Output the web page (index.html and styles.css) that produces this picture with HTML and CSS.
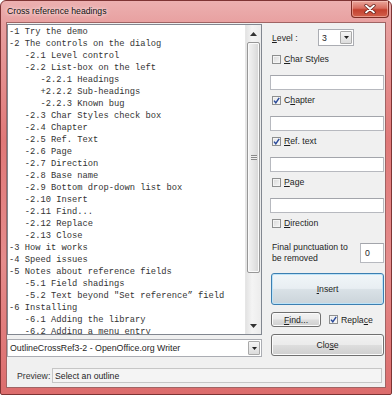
FILE: index.html
```html
<!DOCTYPE html>
<html>
<head>
    <meta charset="utf-8">
    <title>Cross reference headings</title>
    <link rel="stylesheet" href="styles.css">
</head>
<body>
<div class="window">
    <div class="titlebar">
        <span class="title">Cross reference headings</span>
        <div class="close-btn">
            <svg width="12" height="10" viewBox="0 0 12 10"><path d="M2 1.5 L10 8.5 M10 1.5 L2 8.5" stroke="#5a1a14" stroke-width="3.2" stroke-linecap="round"/><path d="M2 1.5 L10 8.5 M10 1.5 L2 8.5" stroke="#fff" stroke-width="1.8" stroke-linecap="round"/></svg>
        </div>
    </div>

    <div class="client">
        <div class="main">
            <div class="left">
                <div class="listbox">
                    <div class="outline">
                        <div class="row">-1 Try the demo</div>
                        <div class="row">-2 The controls on the dialog</div>
                        <div class="row l2">-2.1 Level control</div>
                        <div class="row l2">-2.2 List-box on the left</div>
                        <div class="row l3">-2.2.1 Headings</div>
                        <div class="row l3">+2.2.2 Sub-headings</div>
                        <div class="row l3">-2.2.3 Known bug</div>
                        <div class="row l2">-2.3 Char Styles check box</div>
                        <div class="row l2">-2.4 Chapter</div>
                        <div class="row l2">-2.5 Ref. Text</div>
                        <div class="row l2">-2.6 Page</div>
                        <div class="row l2">-2.7 Direction</div>
                        <div class="row l2">-2.8 Base name</div>
                        <div class="row l2">-2.9 Bottom drop-down list box</div>
                        <div class="row l2">-2.10 Insert</div>
                        <div class="row l2">-2.11 Find...</div>
                        <div class="row l2">-2.12 Replace</div>
                        <div class="row l2">-2.13 Close</div>
                        <div class="row">-3 How it works</div>
                        <div class="row">-4 Speed issues</div>
                        <div class="row">-5 Notes about reference fields</div>
                        <div class="row l2">-5.1 Field shadings</div>
                        <div class="row l2">-5.2 Text beyond "Set reference&#8221; field</div>
                        <div class="row">-6 Installing</div>
                        <div class="row l2">-6.1 Adding the library</div>
                        <div class="row l2">-6.2 Adding a menu entry</div>
                    </div>
                    <div class="vscroll">
                        <div class="sb-arrow"><svg width="7" height="4" viewBox="0 0 7 4"><path d="M0 4 L3.5 0 L7 4 Z" fill="#333"/></svg></div>
                        <div class="sb-track">
                            <div class="sb-thumb"><span class="grip"></span></div>
                        </div>
                        <div class="sb-arrow"><svg width="7" height="4" viewBox="0 0 7 4"><path d="M0 0 L3.5 4 L7 0 Z" fill="#333"/></svg></div>
                    </div>
                </div>

                <div class="combo doc-combo">
                    <span class="combo-text">OutlineCrossRef3-2 - OpenOffice.org Writer</span>
                    <span class="drop"><svg width="5" height="3" viewBox="0 0 5 3"><path d="M0 0 L5 0 L2.5 3 Z" fill="#222"/></svg></span>
                </div>
            </div>

            <div class="right">
                <div class="level-row">
                    <span class="level-label"><u>L</u>evel :</span>
                    <div class="combo level-combo">
                        <span class="combo-text">3</span>
                        <span class="drop"><svg width="5" height="3" viewBox="0 0 5 3"><path d="M0 0 L5 0 L2.5 3 Z" fill="#222"/></svg></span>
                    </div>
                </div>

                <div class="check first"><span class="box"></span><span><u>C</u>har Styles</span></div>
                <div class="field"></div>

                <div class="check"><span class="box checked"><svg width="7" height="7" viewBox="0 0 7 7"><path d="M1 3.6 L2.8 5.8 L6.2 0.8" fill="none" stroke="#2a4a9a" stroke-width="1.5"/></svg></span><span>C<u>h</u>apter</span></div>
                <div class="field"></div>

                <div class="check"><span class="box checked"><svg width="7" height="7" viewBox="0 0 7 7"><path d="M1 3.6 L2.8 5.8 L6.2 0.8" fill="none" stroke="#2a4a9a" stroke-width="1.5"/></svg></span><span><u>R</u>ef. text</span></div>
                <div class="field"></div>

                <div class="check"><span class="box"></span><span><u>P</u>age</span></div>
                <div class="field"></div>

                <div class="check"><span class="box"></span><span><u>D</u>irection</span></div>

                <div class="punct-row">
                    <span class="punct-label">Final punctuation to<br>be removed</span>
                    <div class="num-field">0</div>
                </div>

                <div class="button insert"><span><u>I</u>nsert</span></div>

                <div class="find-row">
                    <div class="button find"><span><u>F</u>ind...</span></div>
                    <div class="check inline"><span class="box checked"><svg width="7" height="7" viewBox="0 0 7 7"><path d="M1 3.6 L2.8 5.8 L6.2 0.8" fill="none" stroke="#2a4a9a" stroke-width="1.5"/></svg></span><span>Repla<u>c</u>e</span></div>
                </div>

                <div class="button close"><span>Clo<u>s</u>e</span></div>
            </div>
        </div>

        <div class="preview-row">
            <span class="preview-label">Preview:</span>
            <div class="preview-field">Select an outline</div>
        </div>
    </div>
</div>
</body>
</html>
```

FILE: styles.css
```css
* { box-sizing: border-box; }
body { margin: 0; font-family: "Liberation Sans", Arial, sans-serif; font-size: 8.7px; color: #1e1e1e; background: #fff; }
u { text-decoration: underline; text-underline-offset: 1px; }

.window { width: 392px; height: 395px; display: flex; flex-direction: column; padding: 0 5px 6px 5px; border: 1px solid #7e3434; border-radius: 6px 6px 2px 2px; background: linear-gradient(to bottom, #ecb0b0 0, #e8a0a0 22px, #e07878 140px, #e58c8c 260px, #dc6c6c 395px); }

.titlebar { height: 21px; display: flex; align-items: flex-start; }
.title { margin-top: 5px; padding-left: 1px; color: #111; text-shadow: 0 0 5px #fbe9e9, 0 0 3px #fbe9e9; }
.close-btn { margin-left: auto; margin-right: -3px; width: 38px; height: 17px; display: flex; align-items: center; justify-content: center; border: 1px solid #7d2c24; border-top: none; border-radius: 0 0 4px 4px; background: linear-gradient(to bottom, #eaa79c 0, #d86d5f 45%, #c4412f 55%, #d2604c 100%); box-shadow: inset 0 0 0 1px rgba(255, 210, 200, 0.5); }

.client { flex: 1; background: #f0f0f0; border: 1px solid #a06464; display: flex; flex-direction: column; }
.main { display: flex; }
.left { width: 255px; display: flex; flex-direction: column; }
.right { width: 114px; margin-left: 8px; display: flex; flex-direction: column; }

.listbox { margin-top: 1px; height: 311px; display: flex; background: #fff; border: 1px solid #828790; }
.outline { flex: 1; overflow: hidden; padding: 1px 0 0 1px; font-family: "Liberation Mono", "Courier New", monospace; font-size: 8.75px; line-height: 12px; color: #333; }
.row { height: 12px; white-space: pre; }
.row.l2 { padding-left: 3ch; }
.row.l3 { padding-left: 6ch; }

.vscroll { width: 16px; display: flex; flex-direction: column; background: linear-gradient(to right, #e3e3e3, #f4f4f4 40%, #ececec); border-left: 1px solid #e6e6e6; }
.sb-arrow { height: 17px; display: flex; align-items: center; justify-content: center; }
.sb-track { flex: 1; padding: 0 1px; }
.sb-thumb { height: 231px; display: flex; align-items: center; justify-content: center; border: 1px solid #979797; border-radius: 2px; background: linear-gradient(to right, #f3f3f3, #e6e6e6 50%, #d6d6d6); box-shadow: inset 0 0 0 1px #fafafa; }
.grip { width: 6px; height: 5px; border-top: 1px solid #8a8a8a; border-bottom: 1px solid #8a8a8a; background: linear-gradient(#f0f0f0 0 1px, #8a8a8a 1px 2px, #f0f0f0 2px); }

.combo { display: flex; align-items: center; background: #fff; border: 1px solid #abadb3; }
.combo-text { flex: 1; padding-left: 2px; white-space: nowrap; overflow: hidden; }
.drop { width: 12px; height: 14px; margin-right: 1px; display: flex; align-items: center; justify-content: center; border: 1px solid #a9a9a9; border-radius: 1px; background: linear-gradient(#f5f5f5, #dcdcdc); }
.doc-combo { margin-top: 4px; height: 18px; }
.doc-combo .combo-text { font-size: 8.8px; }

.level-row { margin-top: 6px; height: 17px; display: flex; align-items: center; }
.level-label { width: 48px; padding-left: 2px; }
.level-combo { width: 36px; height: 17px; }
.level-combo .combo-text { padding-left: 3px; }
.level-combo .drop { height: 13px; }

.check { height: 12px; display: flex; align-items: center; gap: 3px; padding-left: 2px; margin-top: 4px; }
.check.first { margin-top: 7px; }
.box { width: 9px; height: 9px; display: flex; align-items: center; justify-content: center; border: 1px solid #8e8f8f; background: linear-gradient(135deg, #d8d8d8, #f6f6f6); box-shadow: inset 0 0 0 1px #f4f4f4; }
.box.checked { background: linear-gradient(135deg, #e4e4e4, #fbfbfb); }
.field { margin-top: 10px; height: 15px; background: #fff; border: 1px solid #b7b9bf; border-top-color: #a3a5ab; }

.punct-row { margin-top: 13px; display: flex; align-items: center; justify-content: space-between; padding-left: 2px; }
.punct-label { line-height: 11px; }
.num-field { width: 24px; height: 20px; padding-left: 4px; display: flex; align-items: center; background: #fff; border: 1px solid #b7b9bf; border-top-color: #a3a5ab; }

.button { display: flex; align-items: center; justify-content: center; border: 1px solid #707070; border-radius: 3px; background: linear-gradient(#f2f2f2 0, #ebebeb 48%, #dddddd 52%, #cfcfcf 100%); box-shadow: inset 0 0 0 1px #fbfbfb; }
.button.insert { margin-top: 9px; margin-left: 1px; width: 113px; height: 32px; border-color: #3c7fb1; box-shadow: inset 0 0 0 1px #bde3f8; background: linear-gradient(#f1f6f9 0, #e8eef2 48%, #d9e1e6 52%, #cbd4da 100%); }
.find-row { margin-top: 7px; display: flex; align-items: center; }
.button.find { margin-left: 1px; width: 50px; height: 15px; }
.check.inline { margin: 0 0 0 6px; }
.button.close { margin-top: 7px; margin-left: 1px; width: 113px; height: 22px; }

.preview-row { margin-top: 11px; height: 15px; display: flex; align-items: center; padding-left: 10px; }
.preview-label { width: 35px; color: #333; }
.preview-field { width: 330px; height: 15px; padding-left: 2px; display: flex; align-items: center; background: #f4f4f4; border: 1px solid #c6c6c6; }
```
